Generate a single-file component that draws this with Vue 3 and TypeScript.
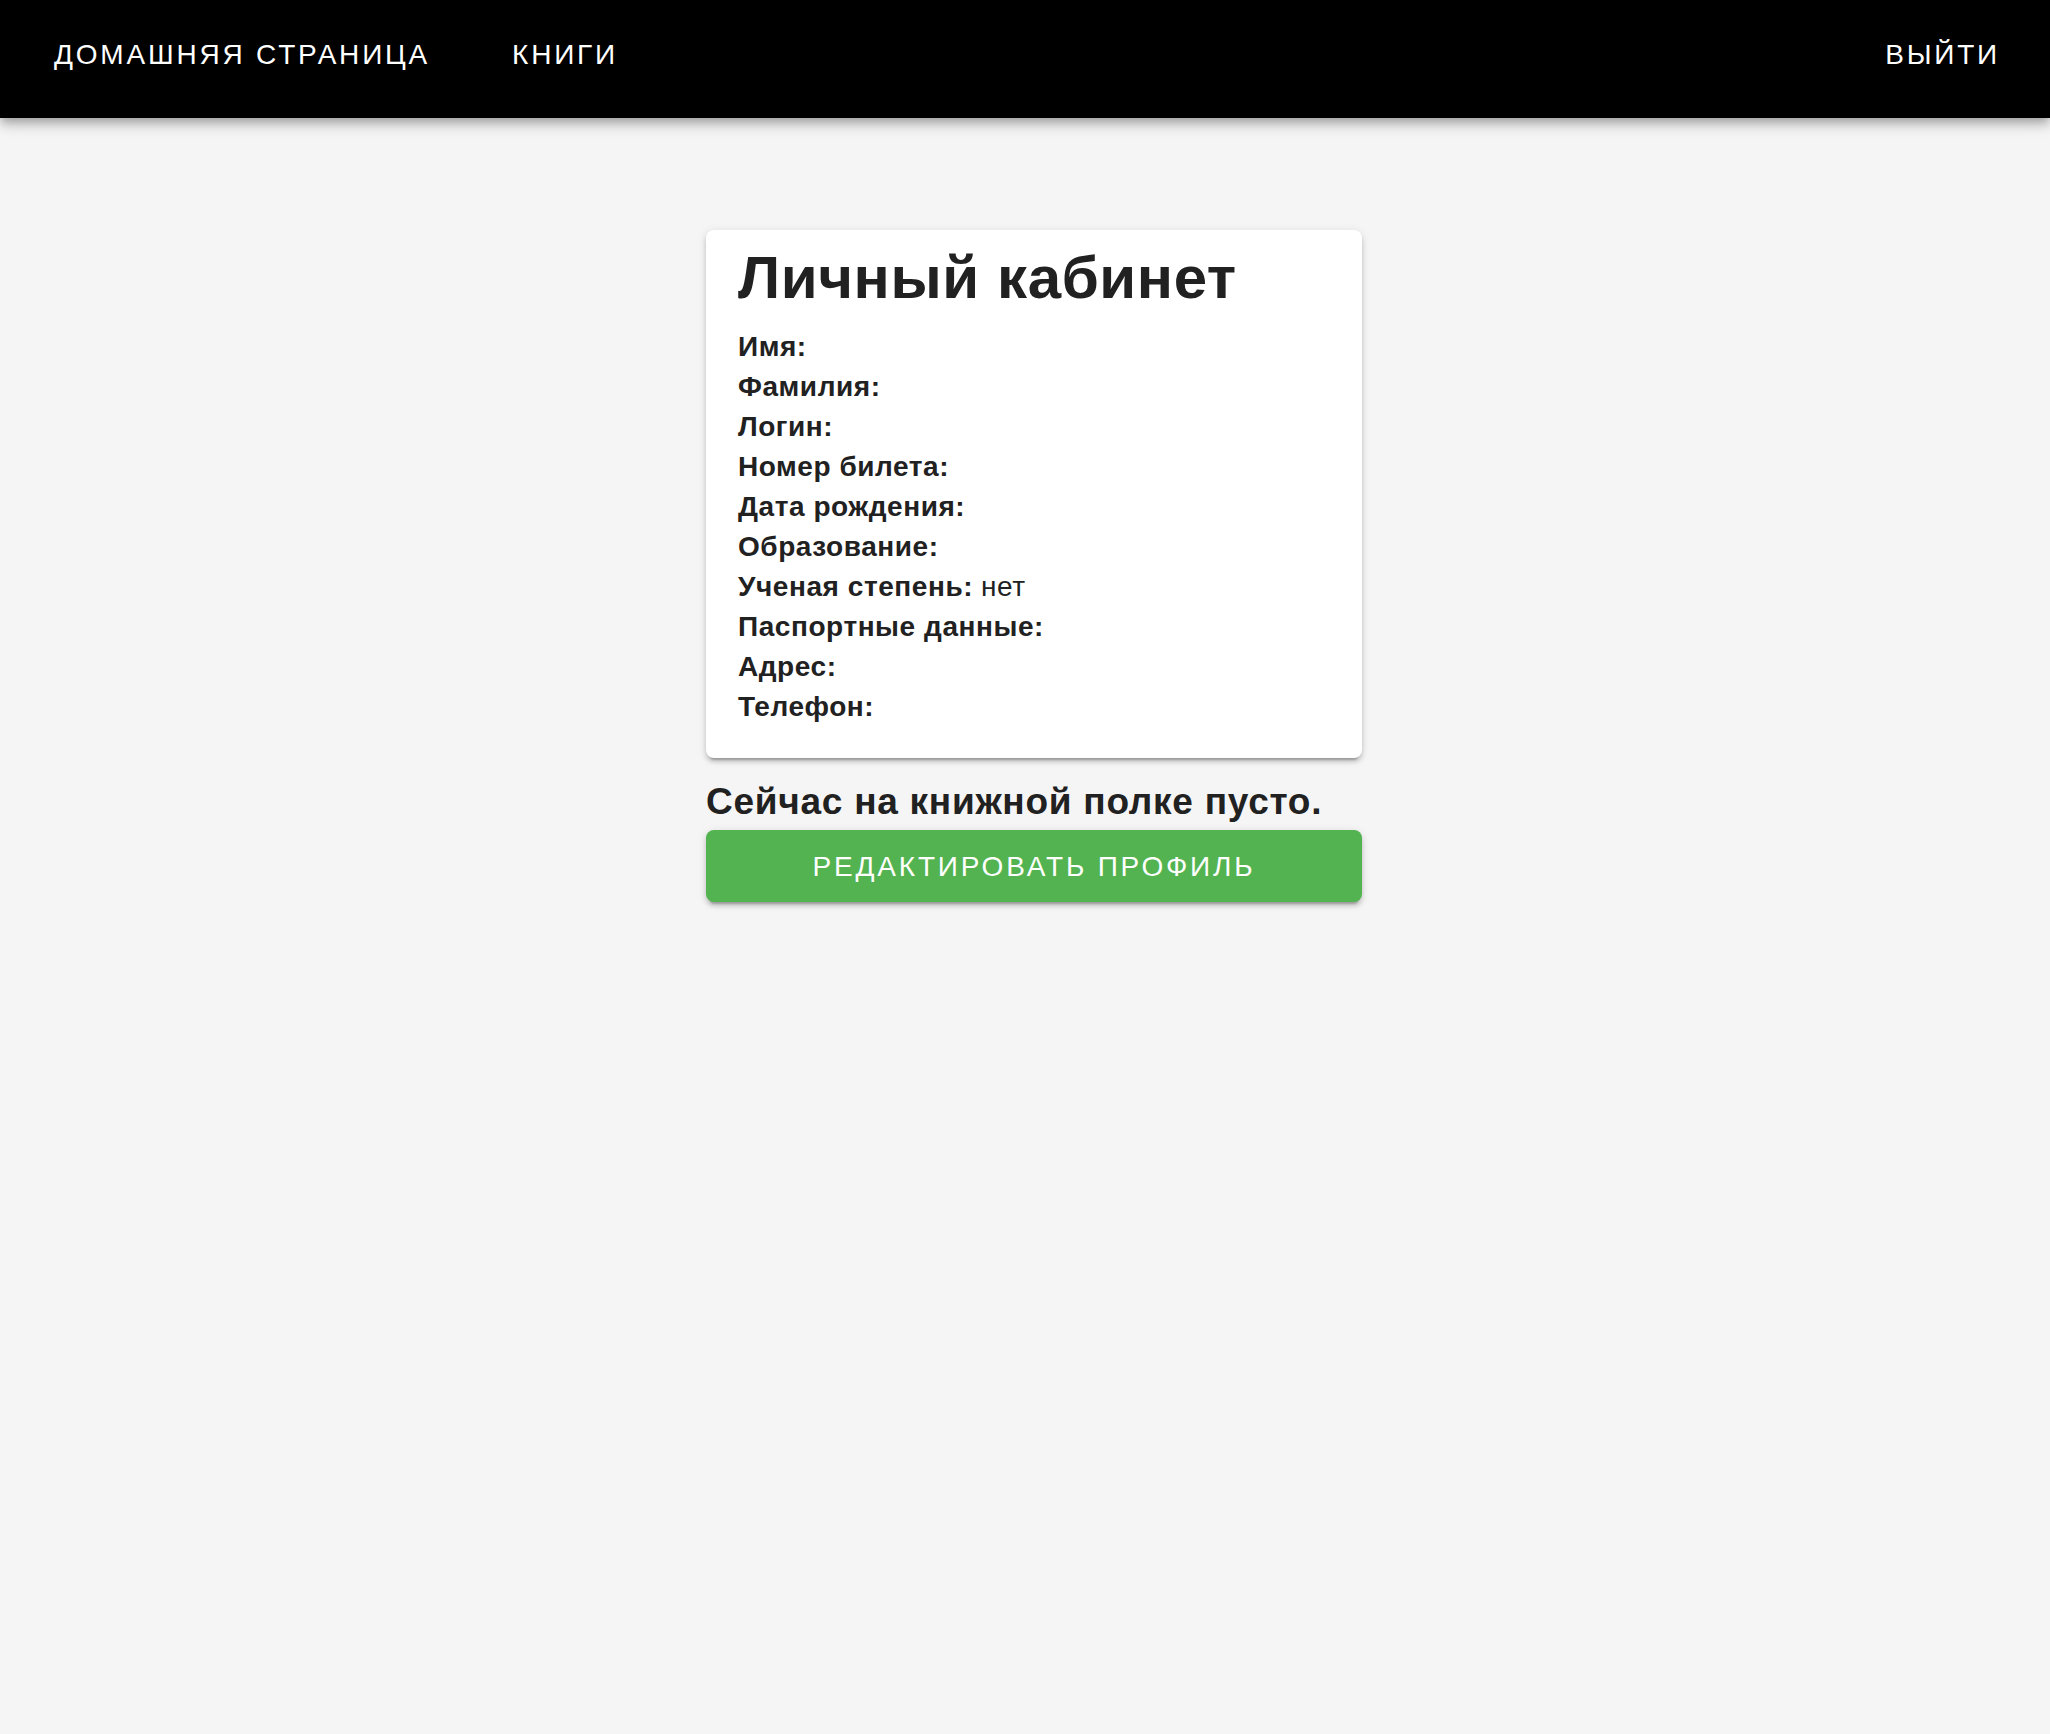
<script setup lang="ts">
interface ProfileField {
  label: string
  value: string
}

const fields: ProfileField[] = [
  { label: 'Имя', value: '' },
  { label: 'Фамилия', value: '' },
  { label: 'Логин', value: '' },
  { label: 'Номер билета', value: '' },
  { label: 'Дата рождения', value: '' },
  { label: 'Образование', value: '' },
  { label: 'Ученая степень', value: 'нет' },
  { label: 'Паспортные данные', value: '' },
  { label: 'Адрес', value: '' },
  { label: 'Телефон', value: '' },
]
</script>

<template>
  <header class="bar">
    <nav class="links">
      <a class="action" href="#home">Домашняя страница</a>
      <a class="action" href="#books">Книги</a>
    </nav>
    <button class="action" type="button">Выйти</button>
  </header>
  <main class="page">
    <div class="column">
      <section class="card">
        <h1 class="title">Личный кабинет</h1>
        <dl class="fields">
          <div v-for="field in fields" :key="field.label" class="field">
            <dt>{{ field.label }}:</dt>
            <dd>{{ field.value }}</dd>
          </div>
        </dl>
      </section>
      <h2 class="shelf">Сейчас на книжной полке пусто.</h2>
      <button class="edit" type="button">Редактировать профиль</button>
    </div>
  </main>
</template>

<style>
body {
  background: #f5f5f5;
}
</style>

<style scoped>
.bar,
.page {
  font-family: 'Liberation Sans', Arial, sans-serif;
  font-size: 28px;
  line-height: 40px;
}

.bar {
  display: flex;
  justify-content: space-between;
  padding: 35px 46px 43px 50px;
  background: #000;
  box-shadow:
    0 4px 8px -2px rgba(0, 0, 0, 0.2),
    0 8px 10px rgba(0, 0, 0, 0.14),
    0 2px 20px rgba(0, 0, 0, 0.12);
}

.links {
  display: flex;
  gap: 74px;
}

.action,
.edit {
  border: 0;
  color: #fff;
  font: inherit;
  letter-spacing: 0.1em;
  text-transform: uppercase;
  text-decoration: none;
  cursor: pointer;
}

.action {
  padding: 0 4px;
  background: none;
}

.page {
  display: grid;
  grid-template-columns: repeat(3, 1fr);
  padding: 112px 32px 48px 50px;
  color: #212121;
}

.column {
  display: flex;
  flex-direction: column;
  grid-column: 2;
}

.card,
.edit {
  border-radius: 8px;
  box-shadow:
    0 6px 2px -4px rgba(0, 0, 0, 0.2),
    0 4px 4px rgba(0, 0, 0, 0.14),
    0 2px 10px rgba(0, 0, 0, 0.12);
}

.card {
  padding: 16px 32px 31px;
  background: #fff;
}

.title {
  margin: 0;
  font-size: 60px;
  line-height: 64px;
  letter-spacing: 0.01em;
}

.fields {
  margin: 17px 0 0;
  letter-spacing: 0.02em;
}

.field {
  display: flex;
  gap: 8px;
}

dt {
  font-weight: 700;
}

dd {
  margin: 0;
}

.shelf {
  margin: 24px 0 8px;
  font-size: 37px;
  line-height: 40px;
  letter-spacing: 0.02em;
}

.edit {
  padding: 17px 32px 15px;
  background: #52b350;
}
</style>
